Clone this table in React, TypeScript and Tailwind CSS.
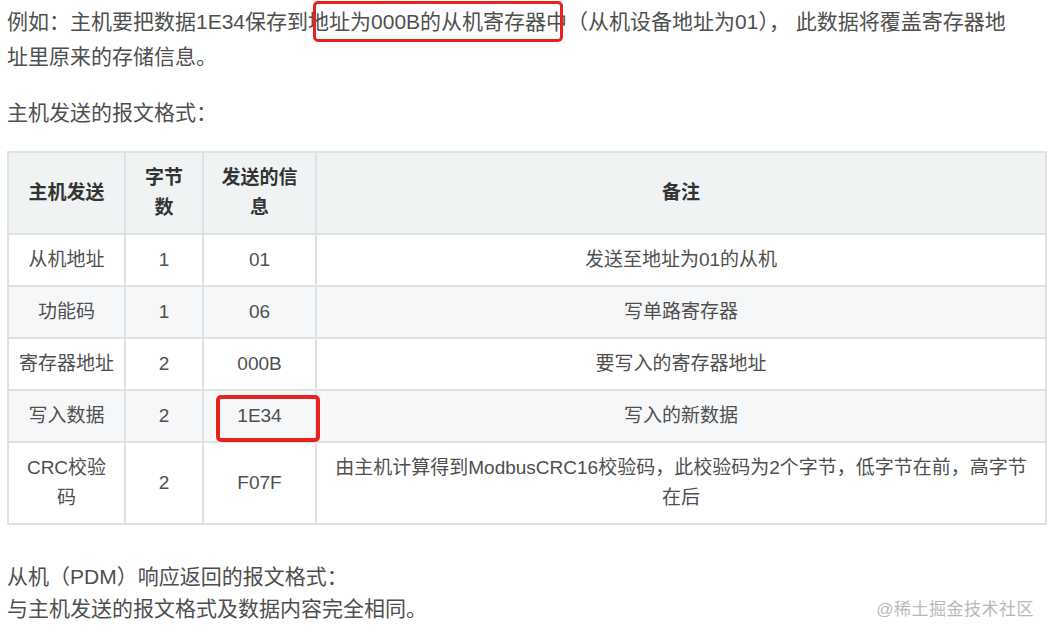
import React from 'react';

interface Row {
  name: string;
  bytes: string;
  info: string;
  note: string;
}

const rows: Row[] = [
  { name: '从机地址', bytes: '1', info: '01', note: '发送至地址为01的从机' },
  { name: '功能码', bytes: '1', info: '06', note: '写单路寄存器' },
  { name: '寄存器地址', bytes: '2', info: '000B', note: '要写入的寄存器地址' },
  { name: '写入数据', bytes: '2', info: '1E34', note: '写入的新数据' },
  {
    name: 'CRC校验码',
    bytes: '2',
    info: 'F07F',
    note: '由主机计算得到ModbusCRC16校验码，此校验码为2个字节，低字节在前，高字节在后',
  },
];

export default function App() {
  return (
    <main className="relative w-[1059px] h-[639px] overflow-hidden bg-white px-[7px] font-['Liberation_Sans','Noto_Sans_CJK_SC',sans-serif] text-[#4f4f4f]">
      <p className="mt-[4px] text-[21px] leading-[35px] w-[1015px]">
        例如：主机要把数据1E34保存到地址为000B的从机寄存器中（从机设备地址为01）， 此数据将覆盖寄存器地址里原来的存储信息。
      </p>
      <p className="mt-[21px] text-[21px] leading-[35px]">主机发送的报文格式：</p>

      <table className="mt-[21px] table-fixed w-[1038px] border-collapse text-[19px] leading-[30px] text-center">
        <colgroup>
          <col className="w-[117px]" />
          <col className="w-[78px]" />
          <col className="w-[113px]" />
          <col className="w-[730px]" />
        </colgroup>
        <thead>
          <tr className="bg-[#f0f3f4] text-[#333] font-bold">
            <th className="border-2 border-[#dfe2e5] px-[9px] py-[10px]">主机发送</th>
            <th className="border-2 border-[#dfe2e5] px-[10px] py-[10px]">字节数</th>
            <th className="border-2 border-[#dfe2e5] px-[14px] py-[10px]">发送的信息</th>
            <th className="border-2 border-[#dfe2e5] px-[14px] py-[10px]">备注</th>
          </tr>
        </thead>
        <tbody>
          {rows.map((r, i) => (
            <tr key={r.name} className={i % 2 === 1 ? 'bg-[#f6f7f8]' : 'bg-white'}>
              <td className="border-2 border-[#dfe2e5] px-[9px] py-[10px]">{r.name}</td>
              <td className="border-2 border-[#dfe2e5] px-[10px] py-[10px]">{r.bytes}</td>
              <td className="border-2 border-[#dfe2e5] px-[14px] py-[10px]">{r.info}</td>
              <td className="border-2 border-[#dfe2e5] px-[14px] py-[10px]">{r.note}</td>
            </tr>
          ))}
        </tbody>
      </table>

      <div className="mt-[36px] text-[21px] leading-[32px]">
        <p>从机（PDM）响应返回的报文格式：</p>
        <p>与主机发送的报文格式及数据内容完全相同。</p>
      </div>

      {/* annotations */}
      <div className="absolute left-[313px] top-[1px] w-[250px] h-[41px] rounded-[5px] border-[3px] border-[#e8231f]" />
      <div className="absolute left-[216px] top-[395px] w-[104px] h-[47px] rounded-[5px] border-4 border-[#e8231f]" />
      <div className="absolute right-[25px] top-[597px] text-[17px] leading-[26px] text-[#b9b9b9] tracking-[0.5px]">
        @稀土掘金技术社区
      </div>
    </main>
  );
}
